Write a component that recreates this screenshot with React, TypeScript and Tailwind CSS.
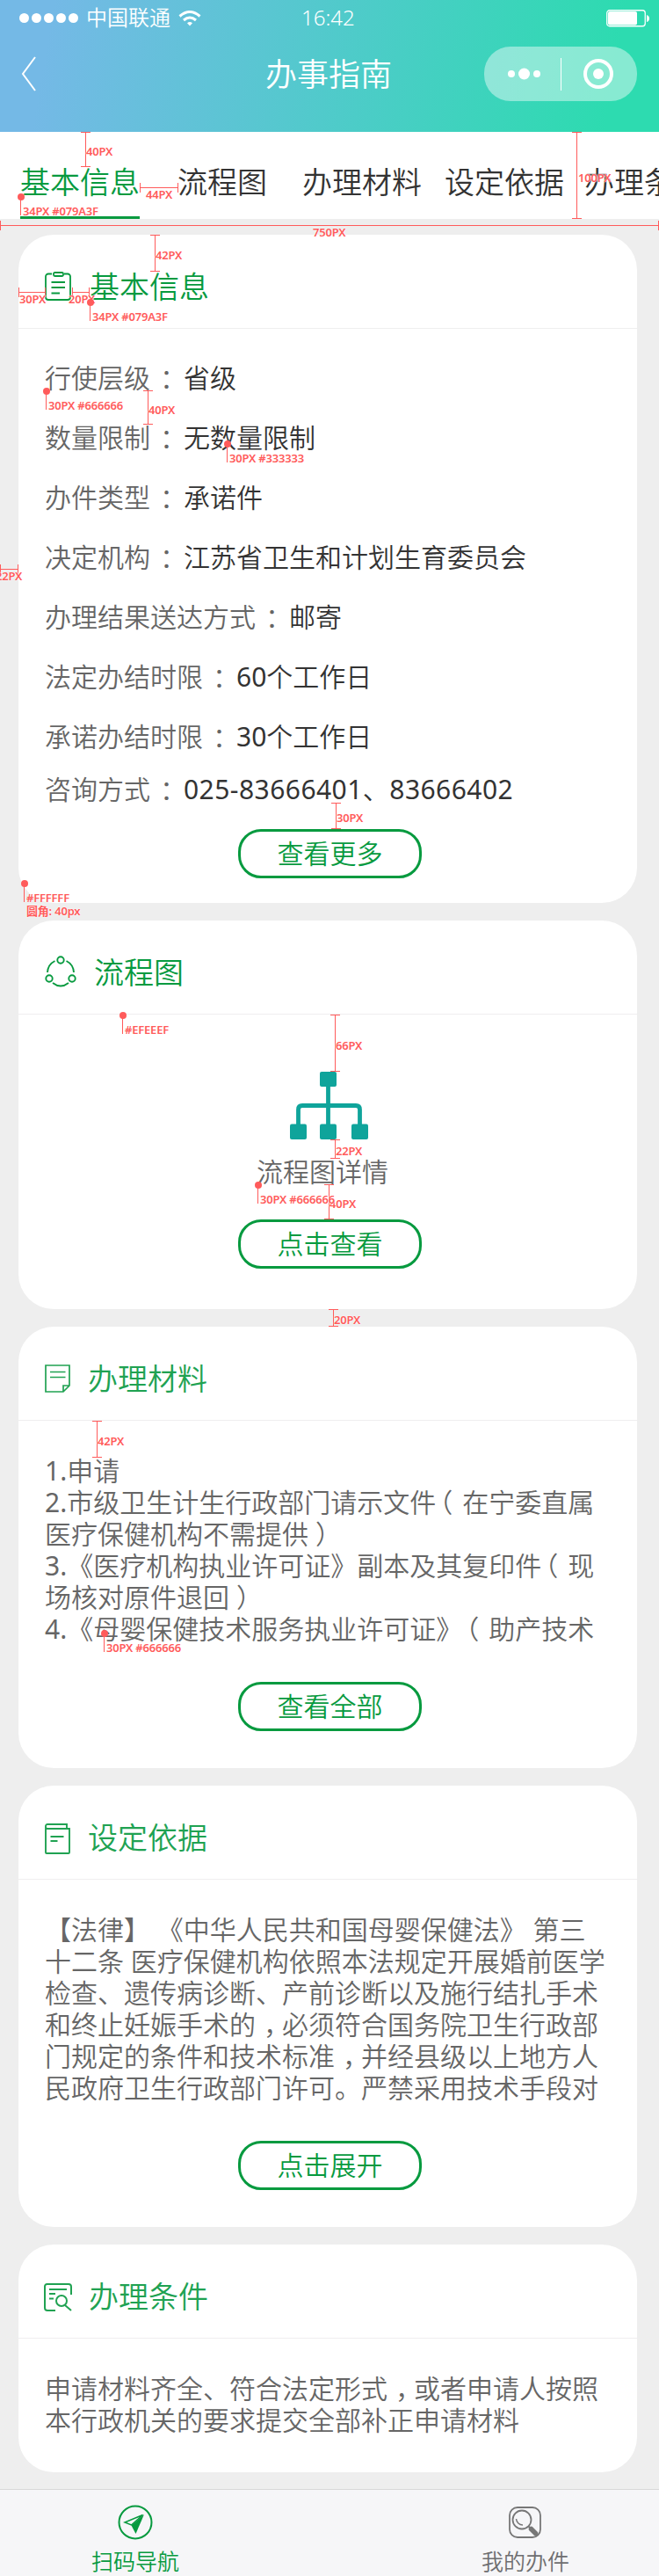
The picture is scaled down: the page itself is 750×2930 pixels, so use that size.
import React from "react";

const SC = "font-['Noto_Sans','Noto_Sans_CJK_SC',sans-serif]";

function Txt({ children }: { children: string }) {
  return (
    <>
      {children.split(/([：（），]|[0-9][0-9.-]*)/).map((s, i) => {
        if (s === "：") return <span key={i} className="inline-block translate-x-[11px]">{s}</span>;
        if (s === "，") return <span key={i} className="inline-block translate-x-[9px]">{s}</span>;
        if (s === "（") return <span key={i} className="inline-block -translate-x-[11px]">{s}</span>;
        if (s === "）") return <span key={i} className="inline-block translate-x-[8px]">{s}</span>;
        if (/^[0-9]/.test(s)) return <span key={i} className="font-normal">{s}</span>;
        return <React.Fragment key={i}>{s}</React.Fragment>;
      })}
    </>
  );
}

function Card({ icon, title, className, headClass, children }: {
  icon: React.ReactNode; title: string; className: string; headClass: string; children: React.ReactNode;
}) {
  return (
    <section className={`w-[704px] shrink-0 rounded-[40px] bg-white ${className}`}>
      <header className={`flex h-[107px] items-center border-b border-[#efeeef] pl-[30px] pt-[10px] text-[34px] leading-[34px] ${headClass}`}>
        {icon}
        <h2 className="pt-[2px]">{title}</h2>
      </header>
      {children}
    </section>
  );
}

function Button({ label, className }: { label: string; className: string }) {
  return (
    <button className={`ml-[250px] flex h-[56px] w-[209px] items-center justify-center rounded-[26px] border-[3px] border-[#079a3f] text-[30px] leading-[30px] text-[#079a3f] ${className}`}>
      {label}
    </button>
  );
}

function Lines({ lines, className }: { lines: string[]; className: string }) {
  return (
    <div className={`whitespace-pre pl-[30px] text-[30px] leading-[36px] text-[#666] ${className}`}>
      {lines.map((l) => <p key={l}><Txt>{l}</Txt></p>)}
    </div>
  );
}

const INFO = [
  ["行使层级：", "省级"],
  ["数量限制：", "无数量限制"],
  ["办件类型：", "承诺件"],
  ["决定机构：", "江苏省卫生和计划生育委员会"],
  ["办理结果送达方式：", "邮寄"],
  ["法定办结时限：", "60个工作日"],
  ["承诺办结时限：", "30个工作日"],
  ["咨询方式：", "025-83666401、83666402"],
];

const V = [
  [97, 150, 190, 98, 172, "40PX"], [656, 150, 249, 658, 202, "100PX"], [176, 267, 309, 177, 290, "42PX"],
  [168, 444, 483, 169, 466, "40PX"], [382, 913, 943, 383, 930, "30PX"], [381, 1154, 1219, 382, 1189, "66PX"],
  [381, 1296, 1318, 382, 1309, "22PX"], [374, 1347, 1387, 375, 1369, "40PX"], [379, 1489, 1509, 380, 1501, "20PX"],
  [110, 1616, 1658, 111, 1639, "42PX"],
] as const;
const H = [
  [0, 750, 256, 356, 264, "750PX"], [159, 203, 213, 166, 221, "44PX"], [21, 52, 332, 22, 340, "30PX"],
  [82, 102, 332, 78, 340, "20PX"], [0, 21, 647, -5, 655, "22PX"],
] as const;
const P = [
  [23, 224, "34PX #079A3F"], [102, 344, "34PX #079A3F"], [52, 445, "30PX #666666"], [258, 505, "30PX #333333"],
  [27, 1005, "#FFFFFF"], [139, 1155, "#EFEEEF"], [293, 1348, "30PX #666666"], [118, 1858, "30PX #666666"],
] as const;

function Label({ x, y, children }: { x: number; y: number; children: string }) {
  return (
    <span className="absolute whitespace-pre text-[13px] font-semibold leading-[14px] tracking-[-0.2px] [text-shadow:0_0_1px_#fff,0_0_2px_#fff]" style={{ left: x, top: y - 7 }}>
      {children}
    </span>
  );
}

function Annotations() {
  return (
    <div className="pointer-events-none absolute inset-0 overflow-hidden font-['Noto_Sans','Noto_Sans_CJK_SC',sans-serif] text-[#ff5b5b]">
      {V.map(([x, a, b, lx, ly, t], i) => (
        <div key={i}>
          <i className="absolute w-px bg-[#ff5b5b]" style={{ left: x, top: a, height: b - a }} />
          <i className="absolute h-px w-[11px] bg-[#ff5b5b]" style={{ left: x - 5, top: a }} />
          <i className="absolute h-px w-[11px] bg-[#ff5b5b]" style={{ left: x - 5, top: b - 1 }} />
          <Label x={lx} y={ly}>{t}</Label>
        </div>
      ))}
      {H.map(([a, b, y, lx, ly, t], i) => (
        <div key={i}>
          <i className="absolute h-px bg-[#ff5b5b]" style={{ left: a, top: y, width: b - a }} />
          <i className="absolute h-[11px] w-px bg-[#ff5b5b]" style={{ left: a, top: y - 5 }} />
          <i className="absolute h-[11px] w-px bg-[#ff5b5b]" style={{ left: b - 1, top: y - 5 }} />
          <Label x={lx} y={ly}>{t}</Label>
        </div>
      ))}
      {P.map(([x, y, t], i) => (
        <div key={i}>
          <i className="absolute size-[8px] rounded-full bg-[#ff5b5b]" style={{ left: x - 3.5, top: y - 4 }} />
          <i className="absolute h-[21px] w-px bg-[#ff5b5b]" style={{ left: x, top: y }} />
          <Label x={x + 3} y={y + 16}>{t}</Label>
        </div>
      ))}
      <Label x={30} y={1036}>圆角: 40px</Label>
    </div>
  );
}

export default function App() {
  return (
    <div lang="zh-CN" className={`relative flex h-[2930px] w-[750px] flex-col overflow-hidden bg-[#eee] font-[350] ${SC}`}>
      <header className="h-[150px] shrink-0 bg-[linear-gradient(100deg,#74b9e6_8%,#2ddbb0_92%)] text-white">
        <div className="flex h-[41px] items-center pl-[22px] text-[24px] leading-[24px]">
          <div className="flex gap-[3px]">
            {[0, 1, 2, 3, 4].map((i) => <i key={i} className="size-[11px] rounded-full bg-white" />)}
          </div>
          <span className="-mt-px ml-[9px] w-[105px]">中国联通</span>
          <svg width="26" height="18" viewBox="0 0 26 18" fill="none" stroke="#fff" strokeWidth="3">
            <path d="M1.5 6.5Q13-3.5 24.5 6.5M6 11Q13 5 20 11" />
            <path d="M13 17.5l-3-3.2q3-2.4 6 0z" fill="#fff" stroke="none" />
          </svg>
          <span className="-mt-px ml-[114px] w-[347px]">16:42</span>
          <svg width="49" height="20" viewBox="0 0 49 20" fill="none" stroke="#fff">
            <rect x=".75" y=".75" width="43.5" height="18" rx="3" strokeWidth="1.3" />
            <rect x="2" y="2" width="33" height="15.500" rx="2" fill="#fff" stroke="none" />
            <path d="M46 6q3 1 3 4t-3 4z" fill="#fff" stroke="none" />
          </svg>
        </div>
        <div className="flex h-[86px] items-center pl-[24px]">
          <svg width="17" height="40" viewBox="0 0 17 40" fill="none" stroke="#fff" strokeWidth="2"><path d="M16 1L2 20L16 39" /></svg>
          <h1 className="ml-[261px] w-[249px] pt-px text-[36px] leading-[36px]">办事指南</h1>
          <svg width="174" height="62" viewBox="0 0 174 62">
            <rect width="174" height="62" rx="30" fill="#fff" fillOpacity=".43" />
            <g fill="#fff">
              <circle cx="31" cy="31" r="4" /><circle cx="45.500" cy="31" r="6.500" /><circle cx="60" cy="31" r="4" />
              <rect x="87" y="13" width="1" height="37" /><circle cx="130" cy="31" r="6" />
            </g>
            <circle cx="130" cy="31" r="15" fill="none" stroke="#fff" strokeWidth="4" />
          </svg>
        </div>
      </header>
      <nav className="flex h-[99px] shrink-0 bg-white pl-[23px] text-[34px] leading-[34px] text-[#333]">
        <a className="h-full w-[136px] shrink-0 border-b-[3px] border-[#079a3f] pt-[40px] text-[#079a3f]">基本信息</a>
        <a className="ml-[43px] shrink-0 pt-[40px]">流程图</a>
        <a className="ml-[40px] shrink-0 pt-[40px]">办理材料</a>
        <a className="ml-[26px] shrink-0 pt-[40px]">设定依据</a>
        <a className="ml-[23px] shrink-0 pt-[40px]">办理条件</a>
      </nav>
      <main className="flex h-[2582px] shrink-0 flex-col gap-[20px] pl-[21px] pt-[18px]">
        <Card title="基本信息" className="h-[760px]" headClass="text-[#079a3f]" icon={
          <svg className="mr-[20px]" width="31" height="33" viewBox="0 0 31 33" fill="none" stroke="#079a3f" strokeWidth="1.8">
            <path d="M8 2.500H4a3 3 0 0 0-3 3V29a3 3 0 0 0 3 3H26a3 3 0 0 0 3-3V5.500a3 3 0 0 0-3-3H22" />
            <rect x="10" y="1" width="11" height="4" rx="1.500" /><path d="M7.500 12H23M7.500 18H23M7.500 24.500H17" />
          </svg>
        }>
          <dl className="pl-[30px] pt-[22px] text-[30px] leading-[68px]">
            {INFO.map(([k, v], i) => (
              <div key={k} className={i === 7 ? "-mt-[8px] flex h-[68px]" : "flex h-[68px]"}>
                <dt className="text-[#666]"><Txt>{k}</Txt></dt>
                <dd className={i === 7 ? "ml-[8px] tracking-[0.45px] text-[#333]" : "ml-[8px] text-[#333]"}><Txt>{v}</Txt></dd>
              </div>
            ))}
          </dl>
          <Button label="查看更多" className="mt-[11px]" />
        </Card>
        <Card title="流程图" className="h-[442px]" headClass="text-[#079a3f]" icon={
          <svg className="mr-[20px]" width="36" height="36" viewBox="0 0 36 36" fill="none" stroke="#079a3f" strokeWidth="1.900">
            <circle cx="18" cy="5" r="3.700" /><circle cx="5" cy="26" r="3.700" /><circle cx="31" cy="26" r="3.700" />
            <path d="M11.500 6A15.500 15.500 0 0 0 3 19M24.500 6A15.500 15.500 0 0 1 33 19M9 31q9 7 18 0" />
          </svg>
        }>
          <div className="flex flex-col pt-[65px]">
            <svg className="ml-[309px]" width="89" height="77" viewBox="0 0 89 77" fill="#0fa49b">
              <rect x="34" width="19" height="17" rx="2" /><rect y="59.500" width="19" height="17.500" rx="2" />
              <rect x="34" y="59.500" width="19" height="17.500" rx="2" /><rect x="70" y="59.500" width="19" height="17.500" rx="2" />
              <path d="M43.500 16V62M9.500 62V43q0-4.500 4.500-4.500H75q4.500 0 4.500 4.500V62" fill="none" stroke="#0fa49b" strokeWidth="4.800" />
            </svg>
            <p className="ml-[271px] mt-[22px] text-[30px] leading-[30px] text-[#666]">流程图详情</p>
            <Button label="点击查看" className="mt-[39px]" />
          </div>
        </Card>
        <Card title="办理材料" className="h-[502px]" headClass="text-[#20a252]" icon={
          <svg className="mr-[20px] mt-[2px]" width="29" height="32" viewBox="0 0 29 32" fill="none" stroke="#20a252" strokeWidth="1.700">
            <path d="M1 1H28V24L21 31H1zM21 31V24H28M6 8.500H23.500M6 14.500H23.500" />
          </svg>
        }>
          <Lines className="pt-[39px]" lines={["1.申请", "2.市级卫生计生行政部门请示文件（在宁委直属", "医疗保健机构不需提供）", "3.《医疗机构执业许可证》副本及其复印件（现", "场核对原件退回）", "4.《母婴保健技术服务执业许可证》（助产技术"]} />
          <Button label="查看全部" className="mt-[42px]" />
        </Card>
        <Card title="设定依据" className="h-[502px]" headClass="text-[#20a252]" icon={
          <svg className="mr-[20px] mt-[4px]" width="29" height="35" viewBox="0 0 29 35" fill="none" stroke="#20a252" strokeWidth="1.900">
            <path d="M25 6V1H3a2 2 0 0 0-2 2V33a1 1 0 0 0 1 1H27a1 1 0 0 0 1-1V6H3a2 2 0 0 1-2-2M6.500 15H21.500M6.500 20H14.500" />
          </svg>
        }>
          <Lines className="pt-[39px]" lines={["【法律】 《中华人民共和国母婴保健法》 第三", "十二条 医疗保健机构依照本法规定开展婚前医学", "检查、遗传病诊断、产前诊断以及施行结扎手术", "和终止妊娠手术的，必须符合国务院卫生行政部", "门规定的条件和技术标准，并经县级以上地方人", "民政府卫生行政部门许可。严禁采用技术手段对"]} />
          <Button label="点击展开" className="mt-[42px]" />
        </Card>
        <Card title="办理条件" className="h-[259px]" headClass="text-[#20a252]" icon={
          <svg className="-ml-px mr-[19px] mt-[3px]" width="32" height="32" viewBox="0 0 32 32" fill="none" stroke="#20a252" strokeWidth="2">
            <path d="M13 31H4a3 3 0 0 1-3-3V3.500A2.500 2.500 0 0 1 3.500 1H28a3 3 0 0 1 3 3V13M6 7H26M6 12H13M6 17.500H11M24 25L31 31" />
            <circle cx="20" cy="20" r="6" />
          </svg>
        }>
          <Lines className="pt-[39px]" lines={["申请材料齐全、符合法定形式，或者申请人按照", "本行政机关的要求提交全部补正申请材料"]} />
        </Card>
      </main>
      <footer className="flex h-[99px] shrink-0 justify-between border-t border-[#d8d8d8] bg-[#f6f6f8] pl-[104px] pr-[102px] text-[25px] leading-[25px]">
        <div className="flex w-[100px] flex-col items-center pt-[17px] text-[#079a3f]">
          <svg width="40" height="40" viewBox="0 0 40 40" fill="none" stroke="#079a3f" strokeWidth="2">
            <circle cx="20" cy="20" r="18.500" />
            <path d="M28.500 11.500L8 20l7.500 3z" strokeWidth="1.500" />
            <path d="M30 11L15.500 23.500L20.500 33z" fill="#079a3f" stroke="none" />
          </svg>
          <span className="mt-[12px] whitespace-nowrap">扫码导航</span>
        </div>
        <div className="flex w-[100px] flex-col items-center pt-[17px] text-[#6e6e70]">
          <svg width="40" height="40" viewBox="0 0 40 40" fill="none" stroke="#777" strokeWidth="1.800">
            <rect x="2" y="3" width="35" height="34" rx="9" /><circle cx="16" cy="17" r="10.500" />
            <path d="M9.500 16a7.500 7.500 0 0 0 7.500 7" strokeWidth="1.500" />
            <path d="M23.500 24.500L26 27" />
            <path d="M26.500 27.500L31.500 32.500" strokeWidth="5.500" strokeLinecap="round" />
          </svg>
          <span className="mt-[12px] whitespace-nowrap">我的办件</span>
        </div>
      </footer>
      <Annotations />
    </div>
  );
}
